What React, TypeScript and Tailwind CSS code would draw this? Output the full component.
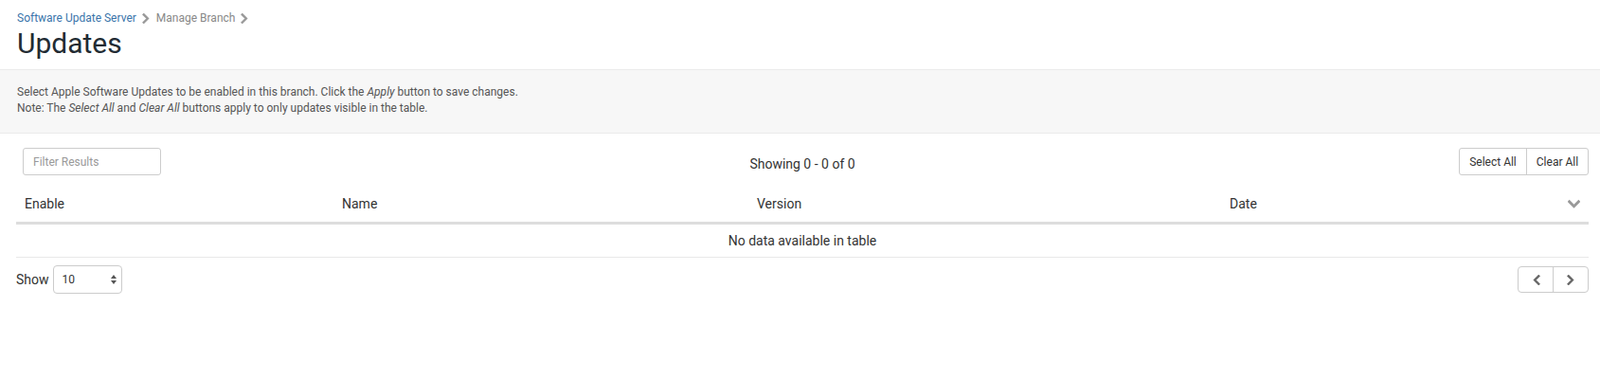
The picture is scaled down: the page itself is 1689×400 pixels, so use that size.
function Chevron({ dir, className }: { dir: "left" | "right" | "down"; className?: string }) {
  const points = {
    right: "3,1.5 7.5,6 3,10.5",
    left: "9,1.5 4.5,6 9,10.5",
    down: "1.5,3.5 6,8 10.5,3.5",
  }[dir];
  return (
    <svg className={className} viewBox="0 0 12 12" fill="none">
      <polyline points={points} stroke="currentColor" strokeWidth="2.6" strokeLinecap="square" />
    </svg>
  );
}

export default function App() {
  const columns = [
    { label: "Enable", width: "w-[335px]" },
    { label: "Name", width: "w-[438px]" },
    { label: "Version", width: "w-[499px]" },
    { label: "Date", width: "" },
  ];

  return (
    <div className="min-h-[400px] bg-white font-['Roboto','Liberation_Sans',sans-serif] text-[#333]">
      {/* page header */}
      <div className="px-[18px] pt-[11px] pb-[9px]">
        <div className="flex items-center gap-[5px] text-[12px] leading-[16px]">
          <a className="text-[#3a74aa]">Software Update Server</a>
          <Chevron dir="right" className="h-[11px] w-[11px] text-[#999]" />
          <span className="text-[#888]">Manage Branch</span>
          <Chevron dir="right" className="h-[11px] w-[11px] text-[#999]" />
        </div>
        <h1 className="mt-[1px] text-[30px] leading-[36px] text-[#222b33]">Updates</h1>
      </div>

      {/* info band */}
      <div className="border-y border-[#ebebeb] bg-[#f7f7f7] px-[18px] pt-[15px] pb-[17px] text-[12px] leading-[17px] text-[#555]">
        <p>
          Select Apple Software Updates to be enabled in this branch. Click the <em>Apply</em> button to save changes.
        </p>
        <p>
          Note: The <em>Select All</em> and <em>Clear All</em> buttons apply to only updates visible in the table.
        </p>
      </div>

      {/* table area */}
      <div className="pl-[17px] pr-[12px] pt-[15px]">
        <div className="grid grid-cols-3 items-center">
          <div>
            <input
              placeholder="Filter Results"
              className="ml-[7px] h-[29px] w-[146px] rounded-[3px] border border-[#ccc] px-[10px] text-[12px] text-[#333] placeholder:text-[#999] outline-none"
            />
          </div>
          <div className="pt-[5px] text-center text-[14px]">Showing 0 - 0 of 0</div>
          <div className="flex justify-end">
            <div className="flex h-[29px] rounded-[3px] border border-[#ccc] text-[12px] text-[#333]">
              <button className="w-[71px] border-r border-[#ccc]">Select All</button>
              <button className="w-[64px]">Clear All</button>
            </div>
          </div>
        </div>

        <div className="mt-[15px]">
          <div className="flex h-[37px] items-center border-b-[3px] border-[#ddd] pb-[3px] text-[14px]">
            {columns.map((c) => (
              <div key={c.label} className={`${c.width} pl-[9px]`}>
                {c.label}
              </div>
            ))}
            <div className="flex flex-1 justify-end pr-[9px]">
              <Chevron dir="down" className="h-[13px] w-[13px] text-[#999]" />
            </div>
          </div>
          <div className="flex h-[35px] items-center justify-center border-b border-[#e8e8e8] text-[14px]">
            No data available in table
          </div>
        </div>

        <div className="mt-[8px] flex items-center justify-between">
          <div className="flex items-center gap-[4px] text-[14px]">
            <span>Show</span>
            <div className="relative">
              <select className="h-[30px] w-[73px] appearance-none rounded-[4px] border border-[#ccc] bg-white pl-[9px] text-[12px] text-[#333] outline-none">
                <option>10</option>
                <option>25</option>
                <option>50</option>
              </select>
              <svg
                className="pointer-events-none absolute right-[6px] top-[10px] h-[10px] w-[6px] text-[#555]"
                viewBox="0 0 6 10"
                fill="currentColor"
              >
                <path d="M3 0 L6 4 H0 Z" />
                <path d="M0 6 H6 L3 10 Z" />
              </svg>
            </div>
          </div>
          <div className="flex h-[28px] rounded-[4px] border border-[#ccc]">
            <button className="flex w-[37px] items-center justify-center border-r border-[#ccc]">
              <Chevron dir="left" className="h-[11px] w-[11px] text-[#666]" />
            </button>
            <button className="flex w-[36px] items-center justify-center">
              <Chevron dir="right" className="h-[11px] w-[11px] text-[#666]" />
            </button>
          </div>
        </div>
      </div>
    </div>
  );
}
